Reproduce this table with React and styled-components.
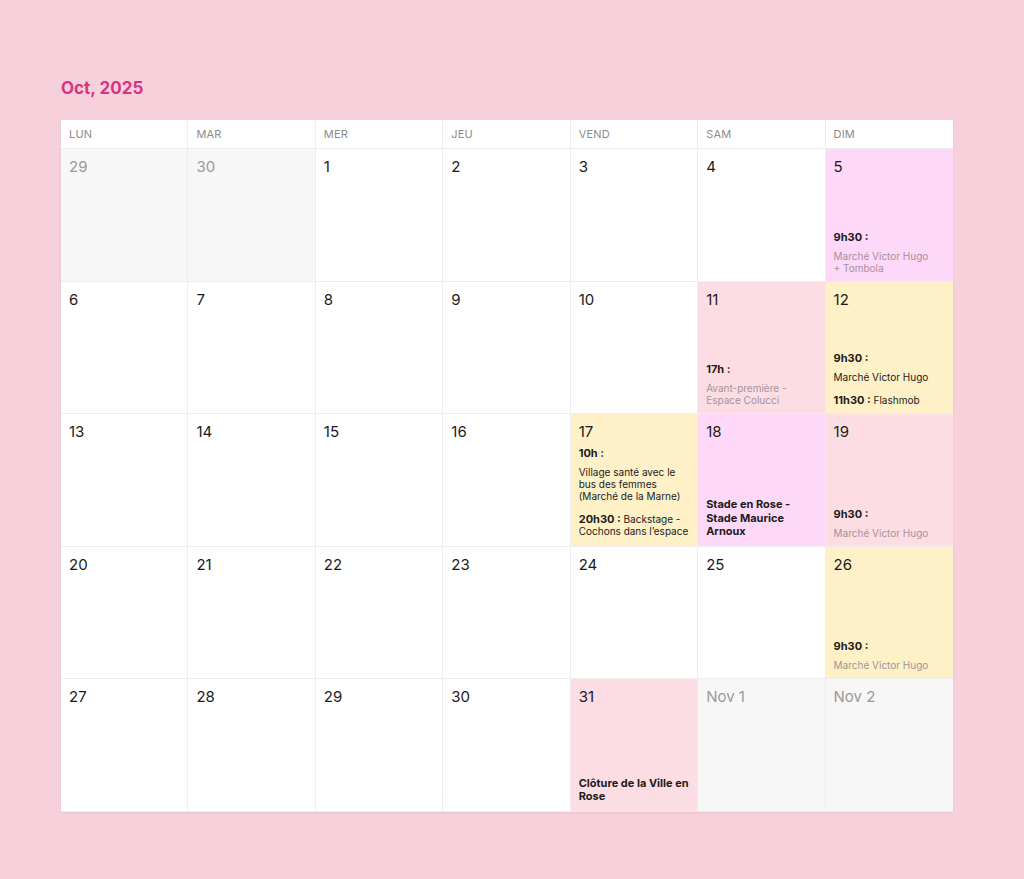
import React from 'react';
import styled, { createGlobalStyle } from 'styled-components';

const GlobalStyle = createGlobalStyle`
  html, body {
    margin: 0;
    padding: 0;
    background: #f6d1dc;
  }
  body {
    font-family: Inter, "Noto Sans", "Liberation Sans", sans-serif;
    -webkit-font-smoothing: antialiased;
  }
`;

const Page = styled.div`
  width: 1024px;
  min-height: 879px;
  box-sizing: border-box;
  padding: 77px 0 0 61px;
`;

const Title = styled.h1`
  margin: 0 0 21px;
  font-size: 17px;
  line-height: 22px;
  font-weight: 700;
  color: #d6347f;
`;

const Grid = styled.div`
  width: 892px;
  display: grid;
  grid-template-columns: repeat(7, 1fr);
  grid-template-rows: 29px repeat(5, 132.6px);
  background: #fff;
  box-shadow: 0 1px 2px rgba(160, 90, 110, 0.12);
`;

const HeadCell = styled.div`
  box-sizing: border-box;
  padding: 0 8px;
  display: flex;
  align-items: center;
  font-size: 11px;
  color: #8c8c8c;
  letter-spacing: 0.2px;
  border-right: 1px solid #eeeeee;
  border-bottom: 1px solid #eeeeee;
  &:nth-child(7n) { border-right: none; }
`;

const tones = {
  plain: '#ffffff',
  out: '#f7f7f7',
  violet: '#fdd8f8',
  pink: '#fddde4',
  yellow: '#fff1c7',
};

const Cell = styled.div`
  box-sizing: border-box;
  padding: 9px 8px 7px 8px;
  display: flex;
  flex-direction: column;
  background: ${(p) => tones[p.$tone || 'plain']};
  border-right: 1px solid #eeeeee;
  border-bottom: 1px solid #eeeeee;
  &:nth-child(7n) { border-right: none; }
  overflow: hidden;
`;

const DayNum = styled.div`
  font-size: 15px;
  line-height: 18px;
  color: ${(p) => (p.$out ? '#9a9a9a' : '#1b1b1b')};
`;

const Events = styled.div`
  margin-top: ${(p) => (p.$top ? '6px' : 'auto')};
  display: flex;
  flex-direction: column;
  gap: 11px;
`;

const Event = styled.div`
  display: flex;
  flex-direction: column;
  gap: 6px;
`;

const Time = styled.span`
  font-size: 11px;
  line-height: 13px;
  font-weight: 700;
  color: #1b1b1b;
`;

const Desc = styled.div`
  font-size: 10px;
  line-height: 12px;
  color: ${(p) => (p.$muted ? '#a4929a' : '#1b1b1b')};
`;

const Inline = styled.div`
  font-size: 10px;
  line-height: 12px;
  color: #1b1b1b;
  ${Time} { line-height: 12px; }
`;

const Headline = styled.div`
  font-size: 11px;
  line-height: 13.5px;
  font-weight: 700;
  color: #1b1b1b;
`;

const days = ['LUN', 'MAR', 'MER', 'JEU', 'VEND', 'SAM', 'DIM'];

const cells = [
  { n: '29', out: true }, { n: '30', out: true }, { n: '1' }, { n: '2' }, { n: '3' }, { n: '4' },
  {
    n: '5', tone: 'violet',
    content: (
      <Events>
        <Event>
          <Time>9h30 :</Time>
          <Desc $muted>Marché Victor Hugo<br />+ Tombola</Desc>
        </Event>
      </Events>
    ),
  },
  { n: '6' }, { n: '7' }, { n: '8' }, { n: '9' }, { n: '10' },
  {
    n: '11', tone: 'pink',
    content: (
      <Events>
        <Event>
          <Time>17h :</Time>
          <Desc $muted>Avant-première -<br />Espace Colucci</Desc>
        </Event>
      </Events>
    ),
  },
  {
    n: '12', tone: 'yellow',
    content: (
      <Events>
        <Event>
          <Time>9h30 :</Time>
          <Desc>Marché Victor Hugo</Desc>
        </Event>
        <Inline><Time>11h30 :</Time> Flashmob</Inline>
      </Events>
    ),
  },
  { n: '13' }, { n: '14' }, { n: '15' }, { n: '16' },
  {
    n: '17', tone: 'yellow',
    content: (
      <Events $top>
        <Event>
          <Time>10h :</Time>
          <Desc>Village santé avec le<br />bus des femmes<br />(Marché de la Marne)</Desc>
        </Event>
        <Inline><Time>20h30 :</Time> Backstage -<br />Cochons dans l’espace</Inline>
      </Events>
    ),
  },
  {
    n: '18', tone: 'violet',
    content: (
      <Events>
        <Headline>Stade en Rose -<br />Stade Maurice<br />Arnoux</Headline>
      </Events>
    ),
  },
  {
    n: '19', tone: 'pink',
    content: (
      <Events>
        <Event>
          <Time>9h30 :</Time>
          <Desc $muted>Marché Victor Hugo</Desc>
        </Event>
      </Events>
    ),
  },
  { n: '20' }, { n: '21' }, { n: '22' }, { n: '23' }, { n: '24' }, { n: '25' },
  {
    n: '26', tone: 'yellow',
    content: (
      <Events>
        <Event>
          <Time>9h30 :</Time>
          <Desc $muted>Marché Victor Hugo</Desc>
        </Event>
      </Events>
    ),
  },
  { n: '27' }, { n: '28' }, { n: '29' }, { n: '30' },
  {
    n: '31', tone: 'pink',
    content: (
      <Events>
        <Headline>Clôture de la Ville en<br />Rose</Headline>
      </Events>
    ),
  },
  { n: 'Nov 1', out: true }, { n: 'Nov 2', out: true },
];

export default function App() {
  return (
    <Page>
      <GlobalStyle />
      <Title>Oct, 2025</Title>
      <Grid>
        {days.map((d) => (
          <HeadCell key={d}>{d}</HeadCell>
        ))}
        {cells.map((c, i) => (
          <Cell key={i} $tone={c.out ? 'out' : c.tone}>
            <DayNum $out={c.out}>{c.n}</DayNum>
            {c.content}
          </Cell>
        ))}
      </Grid>
    </Page>
  );
}
